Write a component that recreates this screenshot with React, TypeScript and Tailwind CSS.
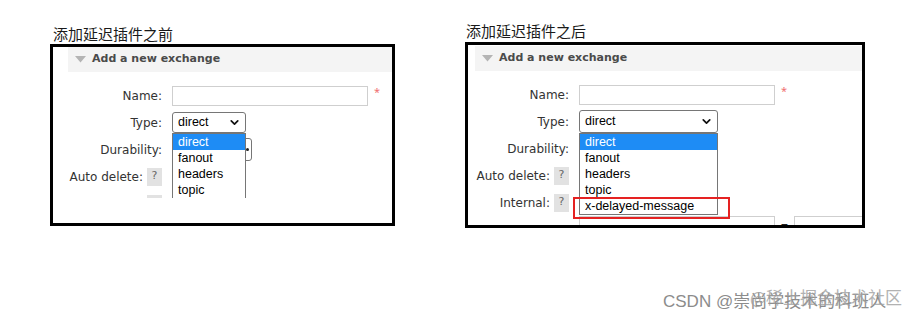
import React from 'react';
import { ChevronDown } from 'lucide-react';

const ui = "font-['DejaVu_Sans',Verdana,sans-serif]";
const sys = "font-['Liberation_Sans',Arial,sans-serif]";
const cjk = "font-['Noto_Sans_CJK_SC','Noto_Sans',sans-serif]";

const types = ['direct', 'fanout', 'headers', 'topic'];

const Label = ({ text, help }: { text: string; help?: boolean }) => (
  <div className={`flex items-center justify-end gap-[4px] pr-[1px] text-[12px] text-[#333] ${ui}`}>
    <span>{text}</span>
    {help && (
      <span className="flex h-[18px] w-[15px] items-center justify-center bg-[#e2e2e2] text-[11px] text-[#666]">?</span>
    )}
  </div>
);

const Header = () => (
  <div className={`flex h-[25px] items-center bg-[#f4f4f4] pl-[7px] ${ui}`}>
    <svg width="11" height="7" viewBox="0 0 11 7" className="mr-[6px]">
      <path d="M0 0 H11 L5.5 6.5 Z" fill="#b4b4b4" />
    </svg>
    <span className="text-[11px] font-bold text-[#4a4a4a]">Add a new exchange</span>
  </div>
);

const Select = ({ width, height }: { width: number; height: number }) => (
  <div
    className={`flex items-center justify-between rounded-[3px] border border-[#767676] bg-white pl-[5px] pr-[4px] text-[12.5px] text-black ${sys}`}
    style={{ width, height }}
  >
    <span>direct</span>
    <ChevronDown size={13} strokeWidth={3.2} color="#111" />
  </div>
);

const Dropdown = ({ width, options, marked }: { width: number; options: string[]; marked?: boolean }) => (
  <div
    className={`absolute left-0 top-full z-10 border border-[#767676] bg-white text-[12.5px] text-black ${sys}`}
    style={{ width }}
  >
    {options.map((o, i) => (
      <div
        key={o}
        className={`relative h-[16px] pl-[5px] leading-[16px] ${i === 0 ? 'bg-[#1e8cf5] text-white' : ''}`}
      >
        {o}
        {marked && i === options.length - 1 && (
          <div className="absolute -left-[7px] -top-[1px] h-[22px] w-[157px] border-2 border-[#e52222]" />
        )}
      </div>
    ))}
  </div>
);

const Form = ({ selectW, selectH, listW, options, marked, internal }: {
  selectW: number; selectH: number; listW: number; options: string[]; marked?: boolean; internal?: boolean;
}) => (
  <div className="grid grid-cols-[95px_auto] auto-rows-[27px] items-center gap-x-[9px]">
    <Label text="Name:" />
    <div className="flex items-center">
      <div className="h-[20px] w-[196px] border border-[#cfcfcf] bg-white" />
      <span className="ml-[6px] -mt-[6px] text-[11px] text-[#f07070]">*</span>
    </div>
    <Label text="Type:" />
    <div className="relative w-fit">
      <Select width={selectW} height={selectH} />
      <Dropdown width={listW} options={options} marked={marked} />
    </div>
    <Label text="Durability:" />
    <div className="flex h-[23px] w-[80px] items-center justify-end rounded-[3px] border border-[#767676] bg-white pr-[2px]">
      <span className="h-[3px] w-[3px] rounded-full bg-[#222]" />
    </div>
    <Label text="Auto delete:" help />
    <div />
    <Label text="Internal:" help />
    <div />
    {internal && (
      <>
        <div />
        <div className="flex items-start self-start">
          <div className="h-[22px] w-[196px] border border-[#cfcfcf]" />
          <span className="mx-[6px] mt-[4px] text-[12px] font-bold leading-none text-[#222]">=</span>
          <div className="h-[22px] w-[90px] border border-[#cfcfcf]" />
        </div>
      </>
    )}
  </div>
);

export default function App() {
  return (
    <div className="relative flex h-[318px] w-[921px] items-start overflow-hidden bg-white">
      <div className="ml-[50px] mt-[23px] w-[345px]">
        <div className={`h-[21px] pl-[3px] text-[15px] leading-[21px] text-[#1a1a1a] ${cjk}`}>添加延迟插件之前</div>
        <div className="h-[182px] border-[3px] border-black bg-white pl-[15px]">
          <Header />
          <div className="h-[126px] overflow-hidden pt-[10px]">
            <Form selectW={74} selectH={21} listW={74} options={types} />
          </div>
        </div>
      </div>

      <div className="ml-[70px] mt-[20px] w-[400px]">
        <div className={`h-[22px] pl-[1px] text-[15px] leading-[22px] text-[#1a1a1a] ${cjk}`}>添加延迟插件之后</div>
        <div className="h-[186px] overflow-hidden border-[3px] border-black bg-white pl-[7px] pt-[1px]">
          <Header />
          <div className="pt-[10px]">
            <Form
              selectW={139}
              selectH={23}
              listW={139}
              options={[...types, 'x-delayed-message']}
              marked
              internal
            />
          </div>
        </div>
      </div>

      <div className={`absolute left-[663px] top-[288px] whitespace-nowrap text-[17px] leading-[24px] text-[#8c8c8c] ${sys}`}>
        <span>CSDN @</span>
        <span className={cjk}>崇尚学技术的科班人</span>
        <span className={`absolute left-[87px] -top-[3px] whitespace-nowrap text-[17px] text-[#a0a0a0] opacity-80 ${cjk}`}>
          @稀土掘金技术社区
        </span>
      </div>
    </div>
  );
}
